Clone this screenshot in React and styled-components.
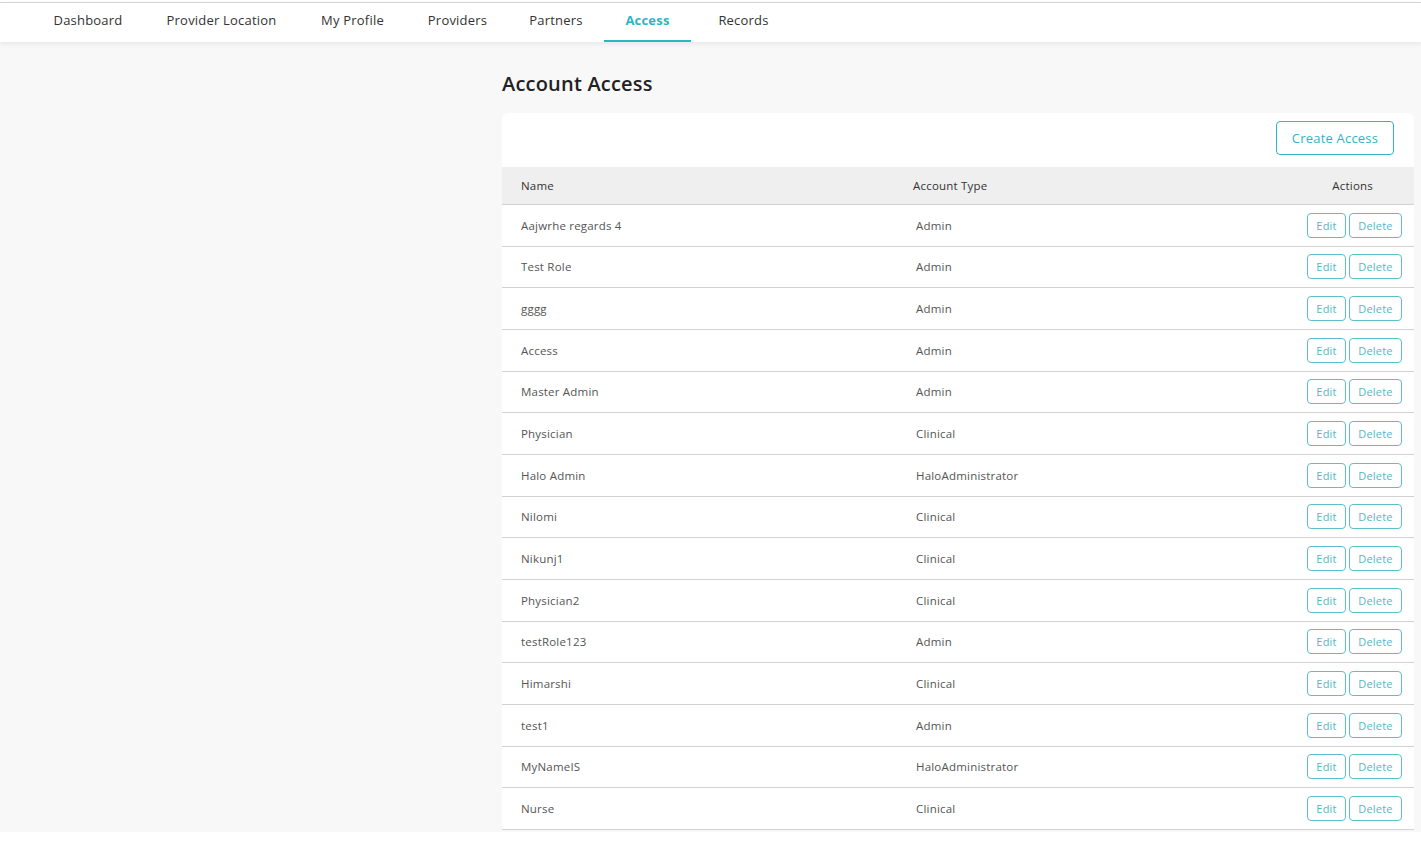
import React from 'react'
import styled, { createGlobalStyle } from 'styled-components'

const GlobalStyle = createGlobalStyle`
  body {
    margin: 0;
    background: #ffffff;
    font-family: "Open Sans", "Noto Sans", sans-serif;
  }
  * { box-sizing: border-box; }
`

const TEAL = '#2fb4c6'

const Page = styled.div`
  padding-top: 2px;
  background: #ffffff;
`

const NavBar = styled.nav`
  display: flex;
  height: 40px;
  border-top: 1px solid #d4d4d4;
  background: #ffffff;
  padding-left: 31px;
  box-shadow: 0 2px 5px rgba(0, 0, 0, 0.07);
  position: relative;
  z-index: 1;
`

const Tab = styled.div`
  width: ${p => p.$w}px;
  display: flex;
  align-items: center;
  justify-content: center;
  font-size: 13px;
  letter-spacing: 0.2px;
  color: ${p => (p.$active ? TEAL : '#333')};
  font-weight: ${p => (p.$active ? 700 : 400)};
  border-bottom: 2px solid ${p => (p.$active ? TEAL : 'transparent')};
  padding-bottom: 3px;
`

const Main = styled.div`
  display: flex;
  height: 790px;
  overflow: hidden;
  background: #f8f8f8;
`

const Side = styled.aside`
  width: 502px;
  flex-shrink: 0;
`

const Content = styled.section`
  width: 912px;
  padding-top: 28px;
`

const Title = styled.h1`
  margin: 0 0 15px;
  font-size: 20px;
  line-height: 28px;
  font-weight: 600;
  color: #222;
  letter-spacing: 0.2px;
`

const Card = styled.div`
  background: #ffffff;
  border-radius: 6px 6px 0 0;
`

const Toolbar = styled.div`
  height: 54px;
  display: flex;
  justify-content: flex-end;
  align-items: flex-start;
  padding: 8px 20px 0 0;
`

const CreateButton = styled.button`
  height: 34px;
  width: 118px;
  border: 1px solid ${TEAL};
  border-radius: 4px;
  background: #ffffff;
  color: ${TEAL};
  font-family: inherit;
  font-size: 13px;
  letter-spacing: 0.2px;
`

const Row = styled.div`
  display: grid;
  grid-template-columns: 392px 1fr auto;
  align-items: center;
  height: ${p => (p.$head ? 38 : 41.67)}px;
  background: ${p => (p.$head ? '#efefef' : '#ffffff')};
  border-bottom: 1px solid #d2d2d2;
  padding: 0 12px 0 19px;
  font-size: 11.5px;
  color: ${p => (p.$head ? '#333' : '#555')};
  letter-spacing: 0.2px;
`

const Cell = styled.div`
  padding-left: ${p => p.$pad || 0}px;
  padding-right: ${p => p.$padR || 0}px;
`

const Actions = styled.div`
  display: flex;
  gap: 3px;
`

const SmallButton = styled.button`
  height: 25px;
  width: ${p => p.$w}px;
  padding: 0;
  border: 1px solid #5cbfca;
  border-radius: 4px;
  background: #ffffff;
  color: #55b8c6;
  font-family: inherit;
  font-size: 11px;
  letter-spacing: 0.2px;
`

const tabs = [
  { label: 'Dashboard', w: 114 },
  { label: 'Provider Location', w: 153 },
  { label: 'My Profile', w: 109 },
  { label: 'Providers', w: 101 },
  { label: 'Partners', w: 96 },
  { label: 'Access', w: 87, active: true },
  { label: 'Records', w: 105 },
]

const rows = [
  ['Aajwrhe regards 4', 'Admin'],
  ['Test Role', 'Admin'],
  ['gggg', 'Admin'],
  ['Access', 'Admin'],
  ['Master Admin', 'Admin'],
  ['Physician', 'Clinical'],
  ['Halo Admin', 'HaloAdministrator'],
  ['Nilomi', 'Clinical'],
  ['Nikunj1', 'Clinical'],
  ['Physician2', 'Clinical'],
  ['testRole123', 'Admin'],
  ['Himarshi', 'Clinical'],
  ['test1', 'Admin'],
  ['MyNameIS', 'HaloAdministrator'],
  ['Nurse', 'Clinical'],
]

const App = () => {
  return (
    <Page>
      <GlobalStyle />
      <NavBar>
        {tabs.map(t => (
          <Tab key={t.label} $w={t.w} $active={t.active}>
            {t.label}
          </Tab>
        ))}
      </NavBar>
      <Main>
        <Side />
        <Content>
          <Title>Account Access</Title>
          <Card>
            <Toolbar>
              <CreateButton>Create Access</CreateButton>
            </Toolbar>
            <Row $head>
              <Cell>Name</Cell>
              <Cell>Account Type</Cell>
              <Cell $padR={29}>Actions</Cell>
            </Row>
            {rows.map(([name, type]) => (
              <Row key={name}>
                <Cell>{name}</Cell>
                <Cell $pad={3}>{type}</Cell>
                <Actions>
                  <SmallButton $w={39}>Edit</SmallButton>
                  <SmallButton $w={53}>Delete</SmallButton>
                </Actions>
              </Row>
            ))}
          </Card>
        </Content>
      </Main>
    </Page>
  )
}

export default App
